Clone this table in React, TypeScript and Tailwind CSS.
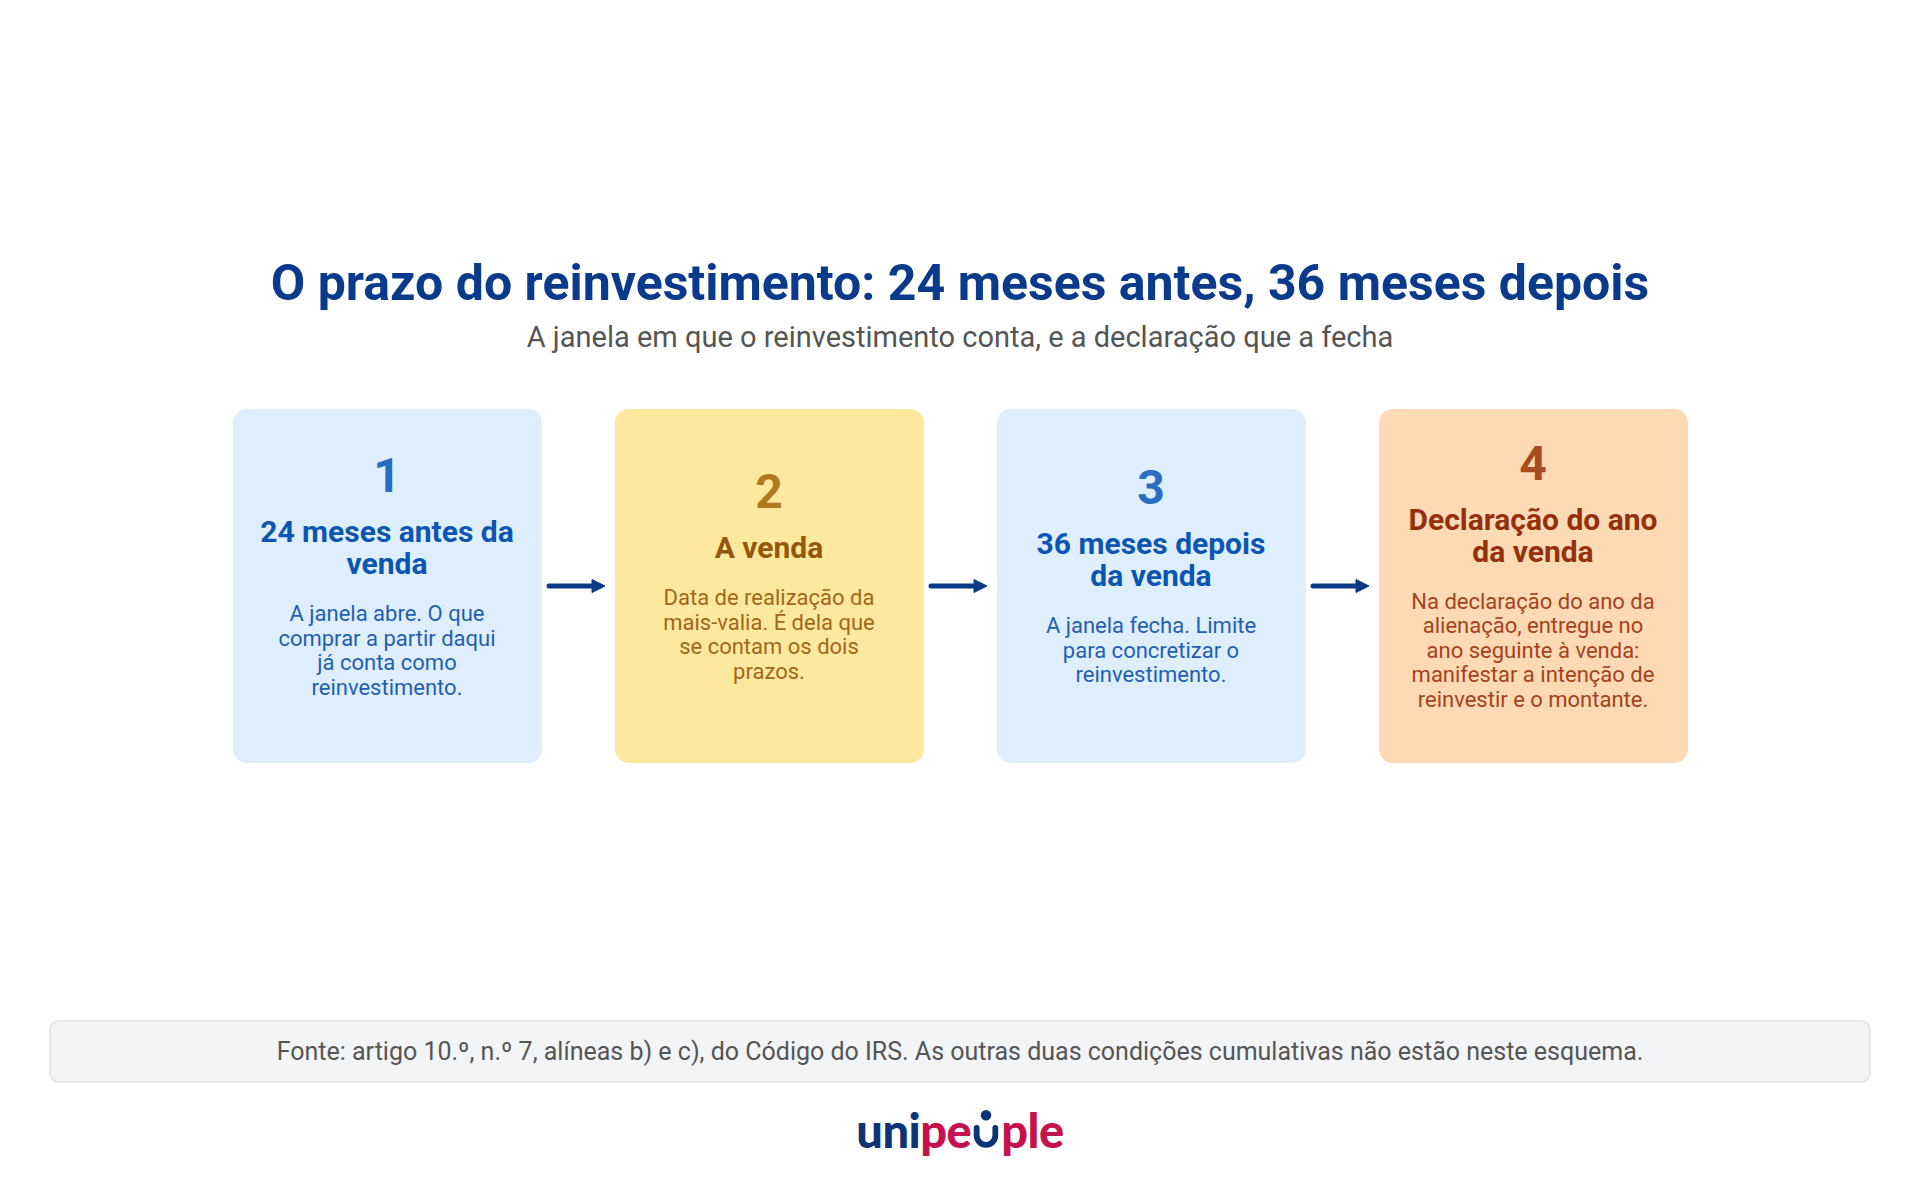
import { Fragment } from "react";

type Step = {
  n: string;
  title: string[];
  body: string[];
  card: string;
  num: string;
  head: string;
  text: string;
};

const STEPS: Step[] = [
  {
    n: "1",
    title: ["24 meses antes da", "venda"],
    body: ["A janela abre. O que", "comprar a partir daqui", "já conta como", "reinvestimento."],
    card: "bg-[#dfeefd]",
    num: "text-[#2a6cc2]",
    head: "text-[#0b56b3]",
    text: "text-[#1f60b3]",
  },
  {
    n: "2",
    title: ["A venda"],
    body: ["Data de realização da", "mais-valia. É dela que", "se contam os dois", "prazos."],
    card: "bg-[#fde89d]",
    num: "text-[#b07a22]",
    head: "text-[#94580c]",
    text: "text-[#a0681b]",
  },
  {
    n: "3",
    title: ["36 meses depois", "da venda"],
    body: ["A janela fecha. Limite", "para concretizar o", "reinvestimento."],
    card: "bg-[#dfeefd]",
    num: "text-[#2a6cc2]",
    head: "text-[#0b56b3]",
    text: "text-[#1f60b3]",
  },
  {
    n: "4",
    title: ["Declaração do ano", "da venda"],
    body: [
      "Na declaração do ano da",
      "alienação, entregue no",
      "ano seguinte à venda:",
      "manifestar a intenção de",
      "reinvestir e o montante.",
    ],
    card: "bg-[#fdd9b4]",
    num: "text-[#a84a22]",
    head: "text-[#94300b]",
    text: "text-[#a5431c]",
  },
];

function Arrow() {
  return (
    <div className="w-[73px] flex items-center justify-center">
      <svg width="60" height="16" viewBox="0 0 60 16" className="ml-[-4px]">
        <line x1="3" y1="8" x2="48" y2="8" stroke="#0a3a85" strokeWidth="5" strokeLinecap="round" />
        <path d="M46 1.5 L59 8 L46 14.5 Z" fill="#0a3a85" strokeLinejoin="round" stroke="#0a3a85" strokeWidth="1" />
      </svg>
    </div>
  );
}

function Logo() {
  return (
    <div className="font-['Lato',sans-serif] font-black text-[47px] leading-none tracking-[-0.5px] flex items-baseline">
      <span className="text-[#0c3474]">uni</span>
      <span className="text-[#c4124f]">pe</span>
      <svg width="28" height="40" viewBox="0 0 24 34" className="mx-[1px]">
        <circle cx="12" cy="6" r="4.5" fill="#0c3474" />
        <path d="M4 17 V23.5 A8 8 0 0 0 20 23.5 V17" fill="none" stroke="#0c3474" strokeWidth="5" strokeLinecap="round" />
      </svg>
      <span className="text-[#c4124f]">ple</span>
    </div>
  );
}

export default function App() {
  return (
    <div className="w-full min-h-screen bg-white flex flex-col font-['Roboto',sans-serif]">
      {/* Title + timeline */}
      <main className="flex-1 flex flex-col items-center justify-center pb-[2px]">
        <h1 className="text-[50px] font-bold leading-[1.15] text-[#0a3a8c] text-center">
          O prazo do reinvestimento: 24 meses antes, 36 meses depois
        </h1>
        <p className="mt-[8px] text-[29px] leading-[1.2] text-[#555555] text-center">
          A janela em que o reinvestimento conta, e a declaração que a fecha
        </p>

        <div className="mt-[54px] flex">
          {STEPS.map((s, idx) => (
            <Fragment key={s.n}>
              {idx > 0 && <Arrow />}
              <div
                className={`w-[309px] h-[354px] rounded-[14px] ${s.card} flex flex-col items-center justify-center text-center px-4 pb-5`}
              >
                <div className={`text-[48px] font-bold leading-none ${s.num}`}>{s.n}</div>
                <h3 className={`mt-4 text-[30px] font-bold leading-[32px] ${s.head}`}>
                  {s.title.map((line) => (
                    <span key={line} className="block whitespace-nowrap">
                      {line}
                    </span>
                  ))}
                </h3>
                <p className={`mt-[22px] text-[22px] leading-[24.5px] ${s.text}`}>
                  {s.body.map((line) => (
                    <span key={line} className="block whitespace-nowrap">
                      {line}
                    </span>
                  ))}
                </p>
              </div>
            </Fragment>
          ))}
        </div>
      </main>

      {/* Source note */}
      <footer className="px-[49px]">
        <div className="h-[63px] rounded-[10px] border-2 border-[#e6e7ea] bg-[#f3f4f6] flex items-center justify-center">
          <p className="text-[25px] text-[#555555]">
            Fonte: artigo 10.º, n.º 7, alíneas b) e c), do Código do IRS. As outras duas condições cumulativas não estão neste esquema.
          </p>
        </div>
        <div className="flex justify-center pt-[24px] pb-[46px]">
          <Logo />
        </div>
      </footer>
    </div>
  );
}
